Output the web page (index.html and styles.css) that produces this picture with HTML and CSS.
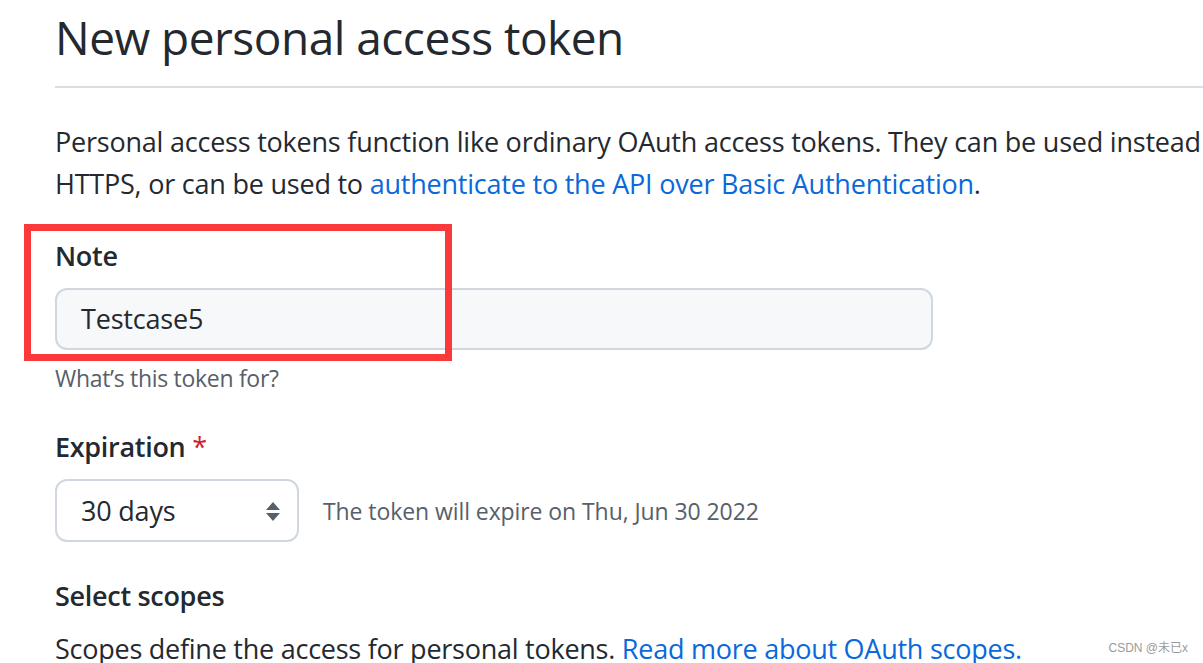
FILE: index.html
```html
<!DOCTYPE html>
<html>
<head>
<meta charset="utf-8">
<link rel="stylesheet" href="styles.css">
</head>
<body>
<div class="page">
  <h2 class="title">New personal access token</h2>
  <p class="intro">Personal access tokens function like ordinary OAuth access tokens. They can be used instead of a password for Git over<br>HTTPS, or can be used to <a href="#">authenticate to the API over Basic Authentication</a>.</p>

  <div class="group note-group">
    <div class="highlight"></div>
    <label class="label">Note</label>
    <div class="input">Testcase5</div>
    <p class="hint">What’s this token for?</p>
  </div>

  <div class="group exp-group">
    <label class="label">Expiration <span class="req">*</span></label>
    <div class="exp-row">
      <div class="select">
        <span>30 days</span>
        <svg class="caret" width="16" height="22" viewBox="0 0 16 22"><path d="M8 2 L15 10 H1 Z" fill="#57606a"/><path d="M8 21 L15 13 H1 Z" fill="#57606a"/></svg>
      </div>
      <span class="exp-note">The token will expire on Thu, Jun 30 2022</span>
    </div>
  </div>

  <div class="group scopes-group">
    <h3 class="label scopes">Select scopes</h3>
    <p class="scopes-desc">Scopes define the access for personal tokens. <a href="#">Read more about OAuth scopes.</a></p>
  </div>
</div>
<div class="watermark">CSDN @未已x</div>
</body>
</html>
```

FILE: styles.css
```css
html, body {
  margin: 0;
  padding: 0;
  background: #ffffff;
  overflow: hidden;
}
body {
  font-family: "Open Sans", "Noto Sans", "Noto Sans CJK SC", sans-serif;
  color: #24292f;
  width: 1203px;
  height: 663px;
  position: relative;
}
.page {
  padding-left: 55px;
  padding-top: 4px;
  width: 1600px;
}
.title {
  margin: 0;
  font-size: 46px;
  font-weight: 400;
  line-height: 66px;
  letter-spacing: -0.5px;
  padding-bottom: 16px;
  border-bottom: 2px solid #d8dee4;
}
.intro {
  margin: 33px 0 0;
  font-size: 27px;
  line-height: 42px;
  letter-spacing: -0.22px;
  white-space: nowrap;
}
a {
  color: #0969da;
  text-decoration: none;
}
.group {
  position: relative;
}
.note-group {
  margin-top: 30px;
}
.highlight {
  position: absolute;
  left: -31px;
  top: -11px;
  width: 414px;
  height: 123px;
  border: 7px solid #fa3a3a;
  pointer-events: none;
  z-index: 2;
}
.label {
  display: block;
  margin: 0;
  font-size: 27px;
  font-weight: 600;
  line-height: 42px;
  letter-spacing: -0.3px;
}
.input {
  margin-top: 11px;
  border: 2px solid #d0d7de;
  border-radius: 12px;
  background: #f6f8fa;
  font-size: 27px;
  line-height: 58px;
  padding-left: 24px;
  box-sizing: border-box;
  height: 62px;
  width: 878px;
  letter-spacing: -0.2px;
}
.hint {
  margin: 10px 0 0;
  font-size: 23px;
  line-height: 36px;
  color: #57606a;
  letter-spacing: -0.3px;
}
.exp-group {
  margin-top: 30px;
}
.req {
  color: #cf222e;
  font-weight: 400;
}
.exp-row {
  margin-top: 11px;
  display: flex;
  align-items: center;
}
.select {
  box-sizing: border-box;
  width: 244px;
  height: 63px;
  border: 2px solid #d0d7de;
  border-radius: 12px;
  background: #ffffff;
  display: flex;
  align-items: center;
  justify-content: space-between;
  padding: 0 16px 0 24px;
  font-size: 27px;
  letter-spacing: -0.2px;
}
.caret {
  display: block;
}
.exp-note {
  margin-left: 24px;
  font-size: 23px;
  color: #57606a;
  letter-spacing: -0.08px;
}
.scopes-group {
  margin-top: 31px;
}
.scopes {
  padding-top: 2px;
}
.scopes-desc {
  margin: 11px 0 0;
  font-size: 27px;
  line-height: 42px;
  letter-spacing: -0.25px;
  white-space: nowrap;
}
.watermark {
  position: absolute;
  right: 15px;
  bottom: 8px;
  font-family: "Liberation Sans", "Noto Sans CJK SC", sans-serif;
  font-size: 12px;
  color: #9a9a9a;
  background: rgba(255,255,255,0.6);
}
```
